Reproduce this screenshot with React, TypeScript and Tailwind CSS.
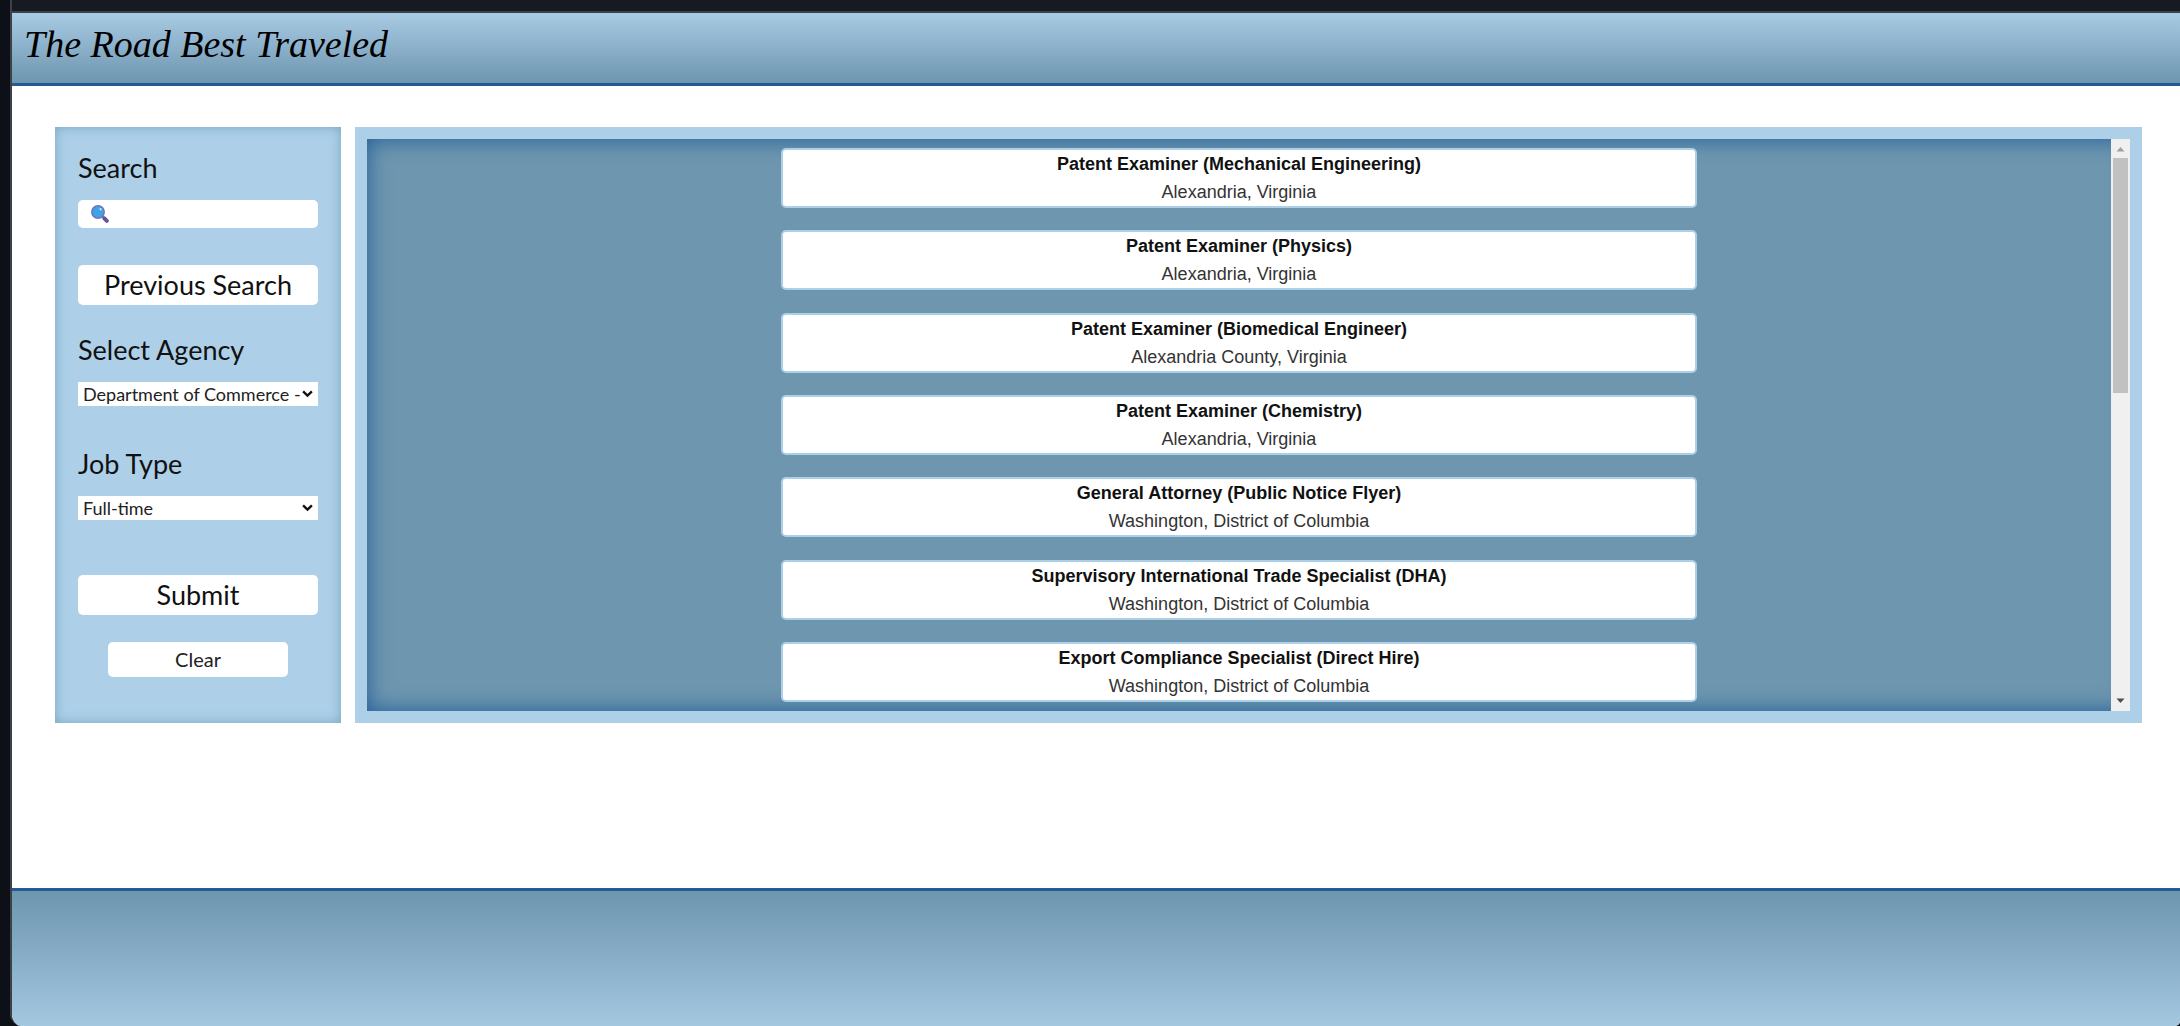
import React from "react";

const jobs = [
  { title: "Patent Examiner (Mechanical Engineering)", place: "Alexandria, Virginia" },
  { title: "Patent Examiner (Physics)", place: "Alexandria, Virginia" },
  { title: "Patent Examiner (Biomedical Engineer)", place: "Alexandria County, Virginia" },
  { title: "Patent Examiner (Chemistry)", place: "Alexandria, Virginia" },
  { title: "General Attorney (Public Notice Flyer)", place: "Washington, District of Columbia" },
  { title: "Supervisory International Trade Specialist (DHA)", place: "Washington, District of Columbia" },
  { title: "Export Compliance Specialist (Direct Hire)", place: "Washington, District of Columbia" },
];

function Magnifier() {
  return (
    <svg viewBox="0 0 18 18" className="h-[18px] w-[18px] shrink-0" aria-hidden="true">
      <path d="M11 11 L13 13" stroke="#7a6aa8" strokeWidth="2" />
      <path d="M13.4 13.4 L15.8 15.8" stroke="#64559a" strokeWidth="4" strokeLinecap="round" />
      <circle cx="7" cy="7" r="6.2" fill="#40a2e8" stroke="#6a78b8" strokeWidth="1.5" />
      <ellipse cx="9.6" cy="4.2" rx="0.9" ry="1.3" fill="#d8f0ff" transform="rotate(-30 9.6 4.2)" />
    </svg>
  );
}

function SelectField({ id, label, options }: { id: string; label: string; options: string[] }) {
  return (
    <div className="flex flex-col gap-[15px]">
      <label htmlFor={id} className="text-[27px] leading-[34px]">
        {label}
      </label>
      <div className="relative flex">
        <select
          id={id}
          className="h-6 w-full appearance-none overflow-hidden bg-white pr-[17px] pl-[5px] text-[18px] leading-6 text-[#222]"
        >
          {options.map((o) => (
            <option key={o}>{o}</option>
          ))}
        </select>
        <svg
          viewBox="0 0 12 8"
          className="pointer-events-none absolute top-[8px] right-[5px] h-[8px] w-[11px]"
          fill="none"
          stroke="#111"
          strokeWidth="2.6"
          aria-hidden="true"
        >
          <path d="M1.2 1.2 L6 5.8 L10.8 1.2" />
        </svg>
      </div>
    </div>
  );
}

function Sidebar() {
  return (
    <form
      onSubmit={(e) => e.preventDefault()}
      className="flex w-[286px] shrink-0 flex-col bg-[#adcfe8] px-[23px] pt-6 pb-[46px] font-['Lato',sans-serif] text-[#111] shadow-[inset_0_0_12px_#7ba5c2]"
    >
      <label htmlFor="search" className="text-[27px] leading-[34px]">
        Search
      </label>
      <div className="mt-[15px] flex h-7 items-center gap-2 rounded-[5px] bg-white px-[13px]">
        <Magnifier />
        <input id="search" type="text" className="w-full min-w-0 text-[18px] leading-[23px] outline-none" />
      </div>
      <button type="button" className="mt-[37px] h-10 rounded-[5px] bg-white text-[27px] leading-10">
        Previous Search
      </button>
      <div className="mt-7 flex flex-col gap-[41px]">
        <SelectField
          id="agency"
          label="Select Agency"
          options={["Department of Commerce - All"]}
        />
        <SelectField id="type" label="Job Type" options={["Full-time", "Part-time"]} />
      </div>
      <button type="submit" className="mt-[55px] h-10 rounded-[5px] bg-white text-[27px] leading-10">
        Submit
      </button>
      <button
        type="reset"
        className="mt-[27px] h-[35px] w-3/4 self-center rounded-[5px] bg-white text-[20px] leading-[35px] text-[#222]"
      >
        Clear
      </button>
    </form>
  );
}

function ScrollTrack() {
  return (
    <div aria-hidden="true" className="flex w-[19px] shrink-0 flex-col items-center bg-[#f0f0f0]">
      <svg viewBox="0 0 19 19" className="h-[19px] w-[19px]">
        <path d="M5.5 12.5 L9.5 8 L13.5 12.5 Z" fill="#a0a0a0" />
      </svg>
      <div className="flex w-full flex-1 flex-col px-[2px]">
        <div className="h-[44%] bg-[#c1c1c1]" />
      </div>
      <svg viewBox="0 0 19 19" className="h-[19px] w-[19px]">
        <path d="M5.5 6.5 L9.5 11 L13.5 6.5 Z" fill="#4d4d4d" />
      </svg>
    </div>
  );
}

function JobList() {
  return (
    <section className="flex min-w-0 flex-1 border-12 border-[#adcfe8] bg-[#6e96af] shadow-[inset_0_0_22px_#1f5c98]">
      <ul className="flex flex-1 flex-col items-center justify-between py-[9px] font-['Liberation_Sans',Arial,sans-serif] text-[18px] leading-7">
        {jobs.map((job) => (
          <li key={job.title} className="w-[52.5%] rounded-[5px] border-2 border-[#adcfe8] bg-white text-center">
            <h2 className="font-bold text-[#111]">{job.title}</h2>
            <p className="text-[#333]">{job.place}</p>
          </li>
        ))}
      </ul>
      <ScrollTrack />
    </section>
  );
}

export default function App() {
  return (
    <div className="flex min-h-screen bg-[#0d1117] pl-[10px]">
      <div className="flex min-w-0 flex-1 flex-col overflow-hidden rounded-bl-[12px] rounded-br-[5px] border-l-2 border-[#3d4249] bg-white">
        <div className="h-[13px] border-b-2 border-[#3d4249] bg-[#161b22]" />
        <header className="h-[73px] border-b-3 border-[#235c94] bg-linear-to-b from-[#a9cbe4] to-[#6e96af] px-3">
          <h1 className="font-['Liberation_Serif',serif] text-[38px] leading-[62px] text-black italic">
            The Road Best Traveled
          </h1>
        </header>
        <main className="flex flex-1 items-start pt-[41px] pr-[38px] pb-[41px] pl-[43px]">
          <div className="flex min-w-0 flex-1 gap-[14px]">
            <Sidebar />
            <JobList />
          </div>
        </main>
        <footer className="h-[138px] border-t-3 border-[#235c94] bg-linear-to-b from-[#6e96af] to-[#a4c7e0]" />
      </div>
    </div>
  );
}
